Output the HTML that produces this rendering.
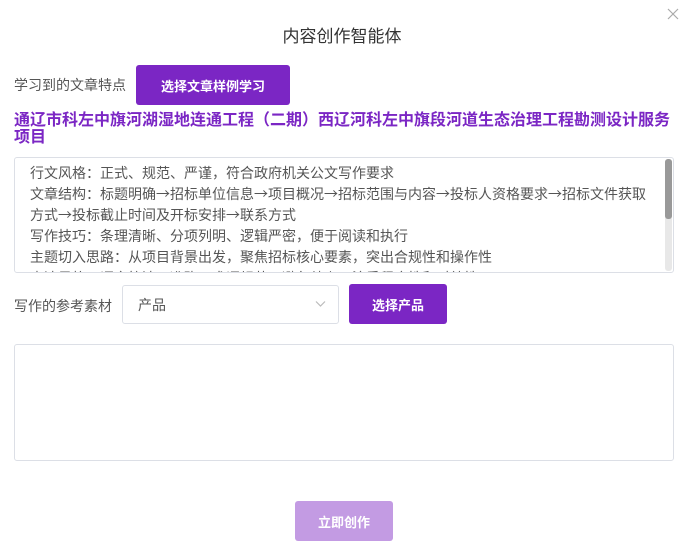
<!DOCTYPE html>
<html><head><meta charset="utf-8"><style>
*{box-sizing:border-box;margin:0;padding:0}
body{width:684px;height:556px;background:#fff;font-family:"Liberation Sans","Noto Sans CJK SC",sans-serif;position:relative;overflow:hidden;color:#333}
.abs{position:absolute}
.btn{position:absolute;background:#7b26c4;color:#fff;border-radius:3px;font-size:13px;font-weight:bold;display:flex;align-items:center;justify-content:center}
.a{font-family:"Noto Sans CJK SC",sans-serif}
</style></head><body>
<div class="abs" style="left:0;width:684px;top:22px;text-align:center;font-size:17px;color:#333">内容创作智能体</div>
<svg class="abs" style="left:667px;top:8px" width="12" height="12" viewBox="0 0 12 12"><path d="M1 1L11 11M11 1L1 11" stroke="#aaa" stroke-width="1.2"/></svg>
<div class="abs" style="left:14px;top:75px;font-size:14px;color:#555">学习到的文章特点</div>
<div class="btn" style="left:136px;top:65px;width:154px;height:40px">选择文章样例学习</div>
<div class="abs" style="left:14px;top:112px;width:660px;font-size:16px;font-weight:bold;color:#7b26c4;line-height:17px">通辽市科左中旗河湖湿地连通工程（二期）西辽河科左中旗段河道生态治理工程勘测设计服务项目</div>
<div class="abs" style="left:14px;top:157px;width:660px;height:116px;border:1px solid #dcdfe6;border-radius:3px;overflow:hidden">
<div style="padding:5px 12px 0 15px;font-size:14px;line-height:21px;color:#555;width:660px;white-space:nowrap">行文风格：正式、规范、严谨，符合政府机关公文写作要求<br>文章结构：标题明确<span class="a">→</span>招标单位信息<span class="a">→</span>项目概况<span class="a">→</span>招标范围与内容<span class="a">→</span>投标人资格要求<span class="a">→</span>招标文件获取<br>方式<span class="a">→</span>投标截止时间及开标安排<span class="a">→</span>联系方式<br>写作技巧：条理清晰、分项列明、逻辑严密，便于阅读和执行<br>主题切入思路：从项目背景出发，聚焦招标核心要素，突出合规性和操作性<br>表达风格：语言简洁、准确，术语规范，避免歧义，注重程序性和时效性</div>
<div class="abs" style="right:1px;top:1px;width:7px;height:112px;background:#e8e8e8;border-radius:3px"></div>
<div class="abs" style="right:1px;top:1px;width:7px;height:60px;background:#999;border-radius:3px"></div>
</div>
<div class="abs" style="left:14px;top:296px;font-size:14px;color:#555">写作的参考素材</div>
<div class="abs" style="left:122px;top:285px;width:217px;height:39px;border:1px solid #dcdfe6;border-radius:3px;font-size:14px;color:#555;padding:9px 0 0 15px">产品
<svg class="abs" style="left:192px;top:14px" width="11" height="8" viewBox="0 0 11 8"><path d="M1 1.5L5.5 6L10 1.5" stroke="#bbb" stroke-width="1.2" fill="none"/></svg></div>
<div class="btn" style="left:349px;top:284px;width:98px;height:40px">选择产品</div>
<div class="abs" style="left:14px;top:344px;width:660px;height:117px;border:1px solid #dcdfe6;border-radius:3px"></div>
<div class="btn" style="left:295px;top:501px;width:98px;height:40px;background:#c39be3">立即创作</div>
</body></html>
